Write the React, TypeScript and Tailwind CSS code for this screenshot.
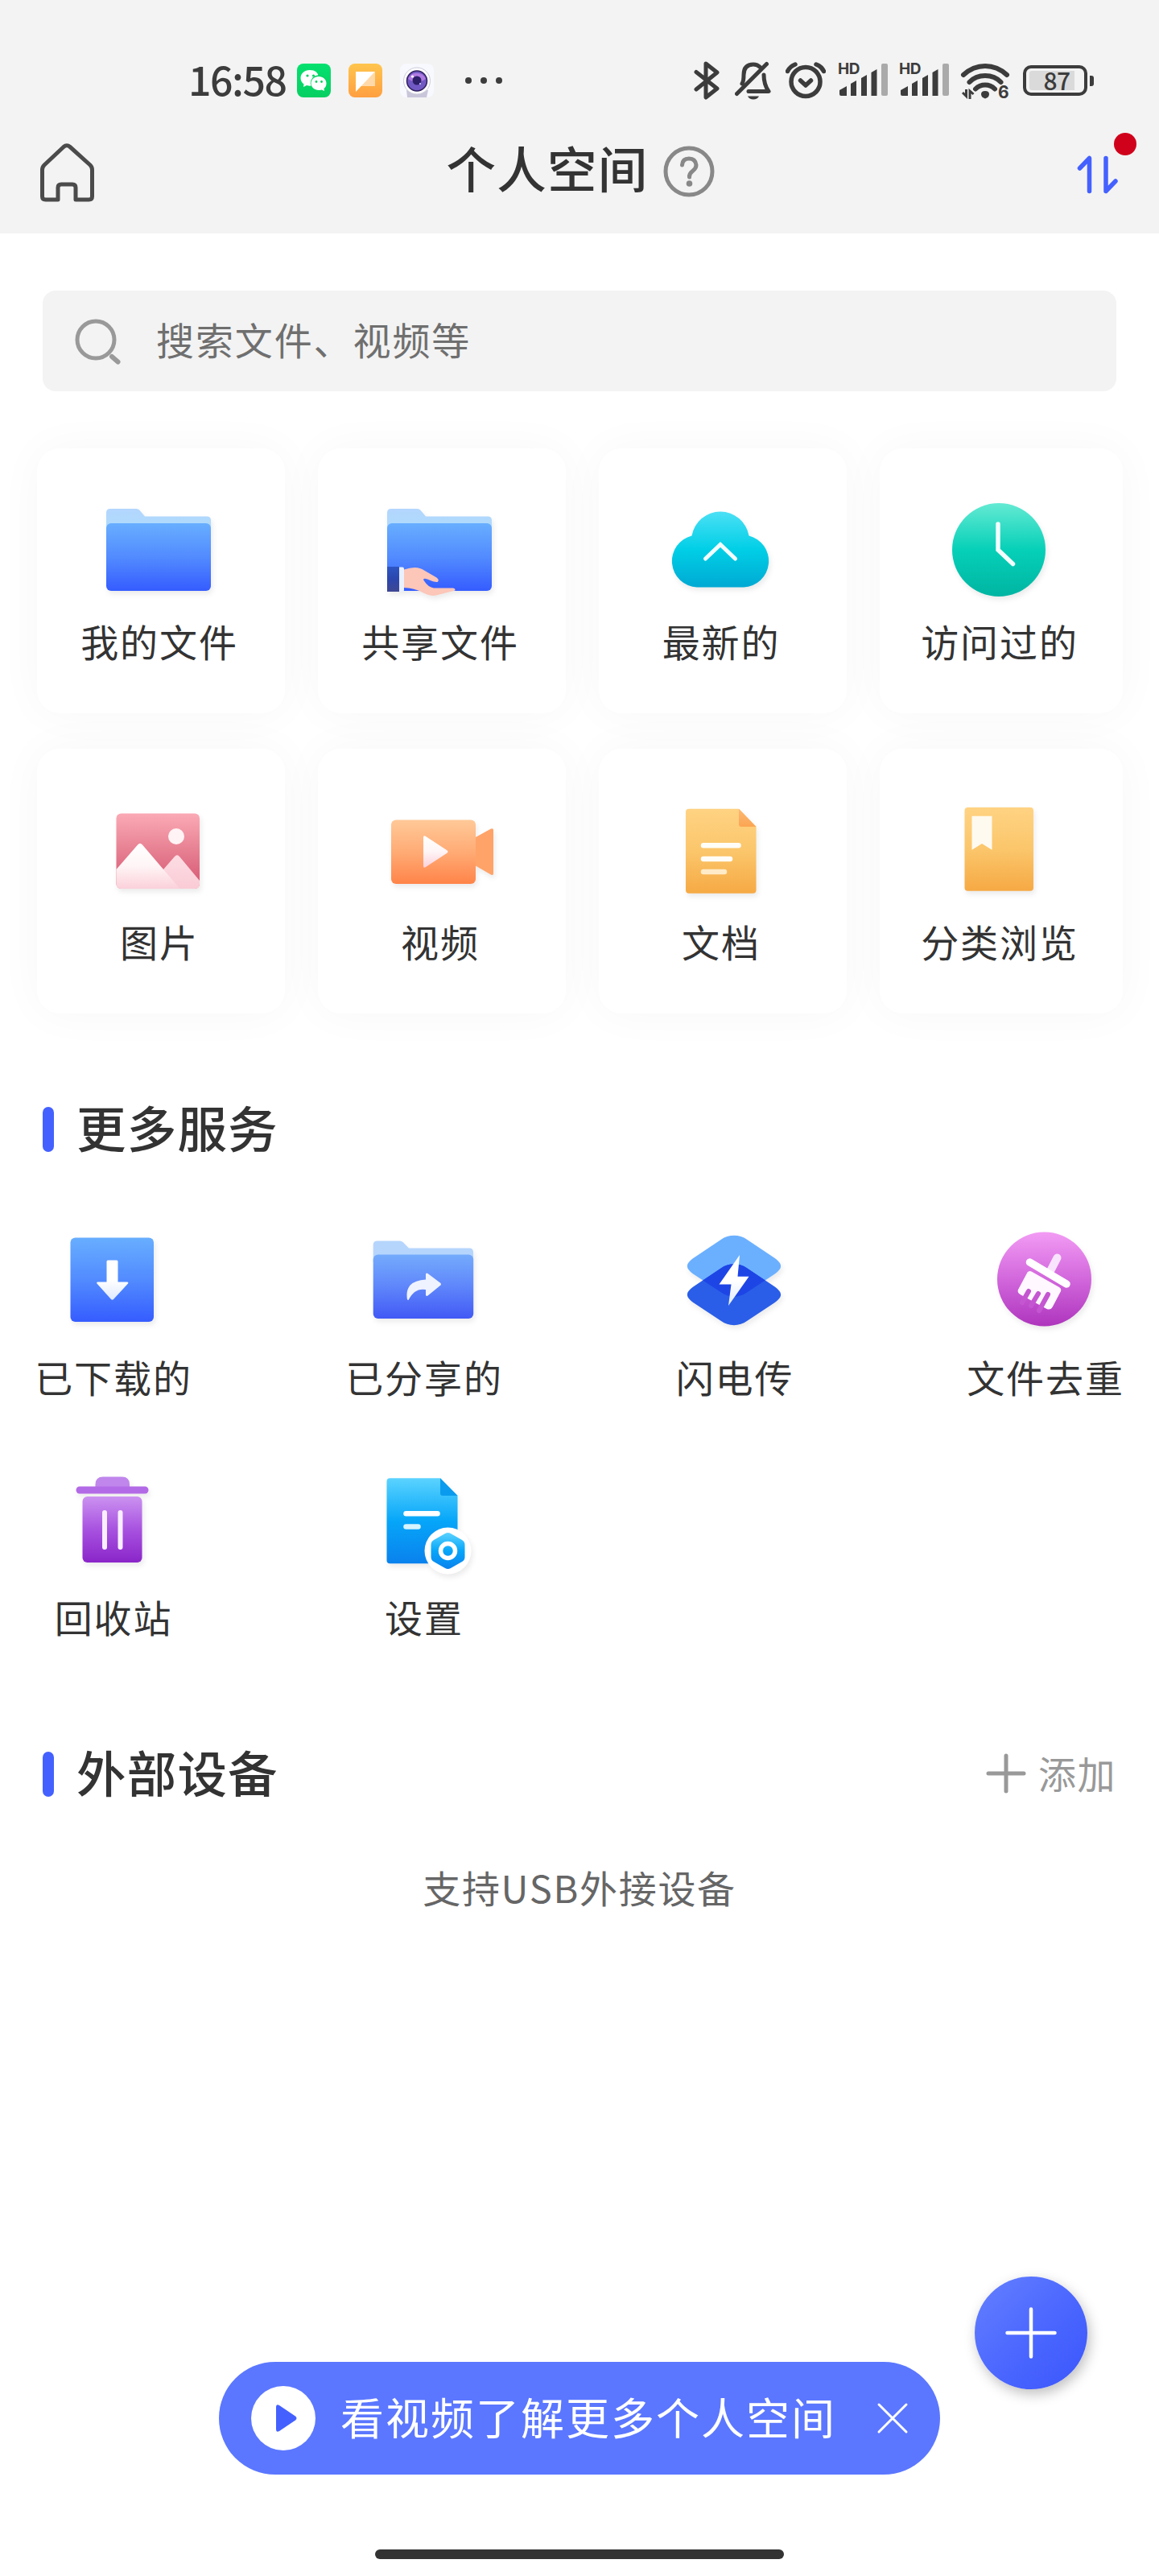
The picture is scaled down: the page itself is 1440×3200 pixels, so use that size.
import type { ReactNode } from "react";

const gradients = [
  { id: "blue", stops: ["#67aeff", "#528bff", "#355cff"] },
  { id: "tab", stops: ["#b3d6fe", "#aedbfb"] },
  { id: "sleeve", stops: ["#2d55c4", "#2c46ad", "#3f4793"] },
  { id: "indigo", stops: ["#74abfc", "#5f86fb", "#4159f5"] },
  { id: "cyan", stops: ["#4be0f5", "#00cfe6", "#00a9d3"] },
  { id: "green", stops: ["#64ead3", "#06d0b8", "#00b5a2"] },
  { id: "pink", stops: ["#fbaab5", "#e67f91", "#d65470"] },
  { id: "snow", stops: ["#ffffff", "#fff5f6", "#fbd0da"] },
  { id: "hill", stops: ["#fcdde4", "#facbd5"] },
  { id: "orange", stops: ["#ffc998", "#ffab75", "#ff8449"] },
  { id: "amber", stops: ["#ffd383", "#fbc66b", "#f6a944"] },
  { id: "fold", stops: ["#fdb873", "#fba552"] },
  { id: "magenta", stops: ["#f29bf4", "#d267dc", "#ae35bd"] },
  { id: "violet", stops: ["#cb92f0", "#a852e0", "#8a25c9"] },
  { id: "sky", stops: ["#5bd3ff", "#06a6f9", "#0a81ed"] },
  { id: "fade", stops: ["#ffffff", "#ffffff", "#dfe9ff"] },
  { id: "notes", stops: ["#ffc54d", "#ff9f40"] },
  { id: "wechat", stops: ["#04e06e", "#07cf62"] },
];

function Gradients() {
  return (
    <svg className="absolute h-0 w-0" aria-hidden="true">
      <defs>
        {gradients.map(({ id, stops }) => (
          <linearGradient key={id} id={id} x1="0" y1="0" x2="0" y2="1">
            {stops.map((color, i) => (
              <stop key={i} offset={i / (stops.length - 1)} stopColor={color} />
            ))}
          </linearGradient>
        ))}
      </defs>
    </svg>
  );
}

function TileIcon({ children }: { children: ReactNode }) {
  return (
    <svg className="h-[130px] w-[140px] shrink-0 overflow-visible drop-shadow-[2px_4px_3px_rgba(0,0,0,0.08)]" viewBox="0 0 140 130" fill="none">
      {children}
    </svg>
  );
}

function Folder() {
  return (
    <>
      <path d="M5 40V19q0-5 5-5h32q3.500 0 5.500 3l5.500 6.500H130q5 0 5 5V40z" fill="url(#tab)" />
      <rect x="5" y="32" width="130" height="84" rx="6" fill="url(#blue)" />
    </>
  );
}

const fileTiles = [
  { label: "我的文件", icon: <Folder /> },
  {
    label: "共享文件",
    icon: (
      <>
        <Folder />
        <path d="M5 86h15v31H5z" fill="url(#sleeve)" />
        <path d="M20 86.500h4q2 0 2 2V115q0 2-2 2h-4z" fill="#e9f0ff" />
        <path d="M26 89.500Q42 84 51 90.500L66.500 99.500Q70.500 102.500 67.500 105Q64 105.500 55 101.500Q49 99.500 50.500 103Q56 111.500 63 112.500L87 112.500Q90 113 89.500 115.500L66 121.500Q59 123 50 118.500Q38 112 26 112z" fill="#fcc6b8" />
      </>
    ),
  },
  {
    label: "最新的",
    icon: (
      <>
        <path d="M34.500 47.500A36 36 0 0 1 105.500 47.500A32.500 32.500 0 0 1 99 111.500H41A32.500 32.500 0 0 1 34.500 47.500z" fill="url(#cyan)" />
        <path d="M51.500 76L70 58.500L88.500 76" stroke="#f2fdff" strokeWidth="5" strokeLinecap="round" />
      </>
    ),
  },
  {
    label: "访问过的",
    icon: (
      <>
        <circle cx="70" cy="65" r="58" fill="url(#green)" />
        <path d="M69 33V65L87.500 82.500" stroke="#f2fffc" strokeWidth="5.500" strokeLinecap="round" />
      </>
    ),
  },
  {
    label: "图片",
    icon: (
      <>
        <rect x="17.500" y="19.500" width="103.500" height="93.500" rx="6" fill="url(#pink)" />
        <path d="M76 89L90 73q3-3.500 6 0L121 103V107q0 6-6 6H80z" fill="url(#hill)" />
        <path d="M17.500 89L44 58.500q3-3.500 6 0L96.500 113H23.500q-6 0-6-6z" fill="url(#snow)" />
        <circle cx="92" cy="48" r="10" fill="#fff3f5" />
      </>
    ),
  },
  {
    label: "视频",
    icon: (
      <>
        <path d="M114 49.500L134 38.500q3-1 3 1.500V94q0 3-3 1.500L114 84z" fill="#ffa369" />
        <rect x="10" y="27.500" width="105" height="79.500" rx="6" fill="url(#orange)" />
        <path d="M50 49.500q0-3.500 3-1.500L79 65q3 2 0 4L53 86q-3 2-3-1.500z" fill="url(#snow)" />
      </>
    ),
  },
  {
    label: "文档",
    icon: (
      <>
        <path d="M31 13.700H93L114.500 36V114.700q0 4-4 4H31q-4 0-4-4V17.700q0-4 4-4z" fill="url(#amber)" />
        <path d="M93 13.700L114.500 36H96q-3 0-3-3z" fill="url(#fold)" />
        <path d="M49 59.300H92.500M49 76H82" stroke="#fffdf8" strokeWidth="6.500" strokeLinecap="round" />
        <path d="M49 92H75" stroke="#ffebc8" strokeWidth="6.500" strokeLinecap="round" />
      </>
    ),
  },
  {
    label: "分类浏览",
    icon: (
      <>
        <rect x="27.500" y="12" width="85.500" height="103.700" rx="4" fill="url(#amber)" />
        <path d="M36.500 22.700H61.500V64.700L49 57L36.500 64.700z" fill="#fffaf0" />
      </>
    ),
  },
];

const DIAMOND =
  "M54 15.800C63 9 77 9 86 15.800L118.500 37.500C131.300 46 131.300 51.400 118.500 60L86 81.600C77 88.400 63 88.400 54 81.600L21.500 60C8.700 51.400 8.700 46 21.500 37.500z";

const services = [
  {
    label: "已下载的",
    icon: (
      <>
        <rect x="17.500" y="13.500" width="103.500" height="104.500" rx="6" fill="url(#blue)" />
        <path d="M64 41.500H75q1.500 0 1.500 1.500V68.500H88q2 0 1 2L71 90q-1.500 1.500-3 0L50.500 70.500q-1-2 1-2H62.500V43q0-1.500 1.500-1.500z" fill="url(#fade)" />
      </>
    ),
  },
  {
    label: "已分享的",
    icon: (
      <>
        <path d="M7.700 44V22.500q0-5 5-5H40.500q3.500 0 6 3.500l5.500 5.500H127q5 0 5 5V44z" fill="#b5d5fd" />
        <rect x="7.700" y="34.500" width="124.500" height="79.500" rx="6" fill="url(#indigo)" />
        <path d="M50 90.500Q46 67 73 65.500V58.500q1-1.500 2.500-.500L91.500 70q1 1.300 0 2.600L75.500 85.500q-1.500 1-2.500-.500V78Q59 75.500 51.500 91z" fill="#eff3ff" />
      </>
    ),
  },
  {
    label: "闪电传",
    icon: (
      <>
        <clipPath id="upper">
          <path d={DIAMOND} />
        </clipPath>
        <path d={DIAMOND} fill="#6bb0ff" />
        <path d={DIAMOND} transform="translate(0 35.500)" fill="#2a5ee8" />
        <g clipPath="url(#upper)">
          <path d={DIAMOND} transform="translate(0 35.500)" fill="#1d45e6" />
        </g>
        <path d="M77 35L74.500 61.700H88.500L63 98L66.500 71.500H51.500z" fill="url(#fade)" />
      </>
    ),
  },
  {
    label: "文件去重",
    icon: (
      <>
        <circle cx="69.500" cy="65" r="58.500" fill="url(#magenta)" />
        <path d="M85.500 38.500L77 55" stroke="#f9e4fd" strokeWidth="10" strokeLinecap="round" />
        <path d="M51.500 44L97 71" stroke="#fff" strokeWidth="9.500" strokeLinecap="round" />
        <path d="M48.500 56.500q2-2.500 5-1L88 75q3 2 2 5L80 99q-2.500 5-7.500 3L39.500 84q-4-2-2.500-6z" fill="#fff8ff" />
        <path d="M50 80L42 94M62 83L53 98M74 84L63 104" stroke="#c556d1" strokeWidth="6" strokeLinecap="round" />
      </>
    ),
  },
  {
    label: "回收站",
    icon: (
      <>
        <path d="M48.500 25V22q0-9.500 9.500-9.500H81.500q9.500 0 9.500 9.500v3z" fill="#c086ec" />
        <rect x="24.500" y="24.500" width="90" height="9" rx="4.500" fill="#b36ae6" />
        <rect x="32.500" y="37" width="74" height="82" rx="6" fill="url(#violet)" />
        <path d="M60 57V100M79.500 57V100" stroke="#f9eeff" strokeWidth="6" strokeLinecap="round" />
      </>
    ),
  },
  {
    label: "设置",
    icon: (
      <>
        <path d="M28.500 14.300H91L112.500 36V120.300H28.500q-4 0-4-4V18.300q0-4 4-4z" fill="url(#sky)" />
        <path d="M91 14.300L112.500 36H94q-3 0-3-3z" fill="#0a9bee" />
        <path d="M48.500 58.300H87.500" stroke="#fff" strokeWidth="6.500" strokeLinecap="round" />
        <path d="M48.500 74.500H63.500" stroke="#d5f4ff" strokeWidth="6.500" strokeLinecap="round" />
        <circle cx="100.500" cy="104.500" r="29" fill="#fff" />
        <path d="M97 83q3.500-2 7 0L118 91q3.500 2 3.500 6V112q0 4-3.500 6L104 126q-3.500 2-7 0L83 118q-3.500-2-3.500-6V97q0-4 3.500-6z" fill="url(#sky)" />
        <circle cx="100.500" cy="104.500" r="9" stroke="#fff" strokeWidth="5.500" />
      </>
    ),
  },
];

function Signal() {
  return (
    <div className="flex h-[44px] w-[63px] flex-col">
      <span className="h-[15px] whitespace-nowrap font-['Inter',sans-serif] text-[19px] font-bold leading-[15px] tracking-[-0.5px]">HD</span>
      <svg className="mt-[-14px] h-[41px] w-[63px]" viewBox="0 0 63 41">
        <path d="M2 33L11 28V40H4q-2 0-2-2zM16 25l7-4V40H16zM29 18l7-4V40H29zM41.500 11l7-4V40h-7z" fill="#3c3c3c" />
        <rect x="54" y="0" width="8" height="40" rx="2" fill="#aaa" />
      </svg>
    </div>
  );
}

function StatusBar() {
  return (
    <div className="flex h-[42px] items-center pl-[234px]">
      <span className="w-[135px] whitespace-nowrap pb-[6px] text-[50px] font-medium leading-[42px] tracking-[-1.500px] text-[#3c3c3c]">16:58</span>
      <div className="flex gap-[22px]">
        <svg className="size-[42px]" viewBox="0 0 42 42">
          <rect width="42" height="42" rx="8" fill="url(#wechat)" />
          <path d="M16 8c-7 0-11.500 4.500-11.500 10 0 3 1.500 5.500 4 7.500L8 29l4-2q6 1.500 9-.500Q31 12 27 17 26 8 16 8z" fill="#fff" />
          <circle cx="27" cy="24.500" r="10.300" fill="#07d466" />
          <path d="M27 16c-5.500 0-9.500 3.800-9.500 8.500s4 8.500 9.500 8.500q2 0 3.500-.500l3.500 1.500-.500-3q3-2.500 3-6.500c0-4.700-4-8.500-9.500-8.500z" fill="#fff" />
          <g fill="#07cf62">
            <circle cx="13" cy="15" r="1.600" />
            <circle cx="20.500" cy="15" r="1.600" />
            <circle cx="24" cy="22.500" r="1.400" />
            <circle cx="30.500" cy="22.500" r="1.400" />
          </g>
        </svg>
        <svg className="size-[42px]" viewBox="0 0 42 42">
          <rect width="42" height="42" rx="8" fill="url(#notes)" />
          <path d="M33 10V28H15z" fill="#ffd9a8" />
          <path d="M9 10H33L9 35z" fill="#fff" />
        </svg>
        <svg className="size-[42px]" viewBox="0 0 42 42">
          <rect width="42" height="42" rx="8" fill="#f8f9ff" />
          <path d="M8 33H35L33 42H9z" fill="#c9c6da" />
          <circle cx="21" cy="21.500" r="16.500" fill="#fff" stroke="#cbcbd8" />
          <circle cx="21" cy="21.500" r="12.500" fill="#7159c4" stroke="#30205e" strokeWidth="1.500" />
          <path d="M10 19a12 12 0 0 1 22 0q-11 8-22 0z" fill="#b07ae0" />
          <circle cx="21" cy="21" r="5.500" fill="#2d1f68" />
          <circle cx="15.500" cy="16" r="1.600" fill="#fff" />
          <circle cx="25" cy="25" r="1" fill="#d9d4ff" />
        </svg>
      </div>
      <div className="ml-[39px] flex gap-[11px]">
        <i className="size-2 rounded-full bg-[#3c3c3c]" />
        <i className="size-2 rounded-full bg-[#3c3c3c]" />
        <i className="size-2 rounded-full bg-[#3c3c3c]" />
      </div>

      <div className="ml-[238px] flex items-center text-[#3c3c3c]">
        <svg className="h-[48px] w-[32px]" viewBox="0 0 32 48" fill="none" stroke="currentColor" strokeWidth="5" strokeLinecap="round" strokeLinejoin="round">
          <path d="M3 13.500L29 34L15 45V3L29 14L3 35" />
        </svg>
        <svg className="ml-[19px] h-[48px] w-[45px]" viewBox="0 0 45 48" fill="none" stroke="currentColor" strokeWidth="5" strokeLinecap="round" strokeLinejoin="round">
          <path d="M9 28Q11 25 11 17Q11 4 23 4Q28 4 31.500 7.500M36 17Q36 29 42 37.500H17" />
          <path d="M39.500 3.500L2.500 40.500" />
          <path d="M16 43.500H30Q28 47.500 23 47.500T16 43.500z" fill="currentColor" stroke="none" />
        </svg>
        <svg className="ml-[18px] h-[48px] w-[50px]" viewBox="0 0 50 48" fill="none" stroke="currentColor" strokeWidth="5.500" strokeLinecap="round" strokeLinejoin="round">
          <circle cx="25" cy="25.500" r="18" />
          <path d="M2.500 12.500Q5.500 6.500 12 4M47.500 12.500Q44.500 6.500 38 4M18.500 24L25 30L31.500 24" />
        </svg>
        <div className="ml-[15px] flex gap-[13px]">
          <Signal />
          <Signal />
        </div>
        <svg className="ml-[14px] h-[48px] w-[46px] overflow-visible" viewBox="0 0 46 48" fill="none" stroke="currentColor">
          <path d="M3 17Q15 6 30 6T57 17M10.500 26Q18 18 30 18T49.500 26M18 34.500Q23 29.500 30 29.500T42 34.500" strokeWidth="6" strokeLinecap="round" />
          <path d="M25 41q0-4 5-4t5 4-5 5.500q-5-1.500-5-5.500z" fill="currentColor" stroke="none" />
          <path d="M2 39L6.500 43.500V35M11 47V37L15.500 41" strokeWidth="3" />
        </svg>
        <span className="w-[14px] whitespace-nowrap pt-[29px] font-['Inter',sans-serif] text-[21px] font-bold leading-[20px]">6</span>
        <div className="ml-[17px] flex h-[38px] w-[80px] items-center rounded-[10px] border-[4px] border-[#3c3c3c] p-[4px]">
          <div className="flex h-[24px] w-[56px] items-center justify-center rounded-l-[3px] bg-[#dadada] pb-[3px] pl-3 text-[30px] font-medium leading-none tracking-[-0.5px]">87</div>
        </div>
        <i className="ml-[3px] h-[13px] w-[5px] rounded-r-[3px] bg-[#3c3c3c]" />
      </div>
    </div>
  );
}

function SectionTitle({ children }: { children: ReactNode }) {
  return (
    <h2 className="flex items-center gap-[28px] text-[61.500px] font-medium leading-[60px] tracking-[1.200px]">
      <i className="h-[56px] w-[14px] rounded-full bg-[#4461ff]" />
      <span className="pb-[7px] leading-[53px]">{children}</span>
    </h2>
  );
}

export default function App() {
  return (
    <div className="relative flex h-[3200px] w-[1440px] flex-col overflow-hidden bg-white font-['MiSans','Noto_Sans_CJK_SC',sans-serif] text-[#333]">
      <Gradients />
      <header className="h-[290px] bg-[#f3f3f3] pt-[79px]">
        <StatusBar />
        <div className="mt-[44px] flex h-[98px] items-center justify-between pl-[48px] pr-[28px]">
          <svg className="h-[74px] w-[70px]" viewBox="0 0 70 74" fill="none" stroke="#4b4b4b" strokeWidth="5" strokeLinejoin="round">
            <path d="M31 5.500Q35 2 39 5.500L64 28Q66.500 30.500 66.500 34V67Q66.500 71 62.500 71H46V56Q46 52 42 52H28Q24 52 24 56V71H8.500Q4.500 71 4.500 67V34Q4.500 30.500 7 28z" />
          </svg>
          <div className="flex items-center gap-[19px] pr-[13px]">
            <h1 className="pb-[12px] text-[61.500px] font-medium leading-none tracking-[1.200px]">个人空间</h1>
            <svg className="mb-[2px] size-[64px]" viewBox="0 0 64 64" fill="none" stroke="#888" strokeWidth="5" strokeLinecap="round">
              <circle cx="32" cy="32" r="29" />
              <path d="M23.500 24Q24 16 32 16T41 24Q41 28 36.500 31.500T32.500 39" />
              <circle cx="32.500" cy="47" r="3.800" fill="#888" stroke="none" />
            </svg>
          </div>
          <div className="relative h-[80px] w-[74px]">
            <svg className="h-[80px] w-[74px]" viewBox="0 0 74 80" fill="none" stroke="#4461ff" strokeWidth="5.500" strokeLinecap="round" strokeLinejoin="round">
              <path d="M3.500 35L15.500 22.500V63.500M36 22.500V63.500L48 51" />
            </svg>
            <i className="absolute right-0 top-[-9px] size-[28px] rounded-full bg-[#d0021b]" />
          </div>
        </div>
      </header>

      <div className="mx-[53px] mt-[71px] flex h-[125px] items-center rounded-[16px] bg-[#f3f3f3] pl-[40px] text-[#6f6f6f]">
        <svg className="mr-[43px] size-[58px]" viewBox="0 0 58 58" fill="none" stroke="#999" strokeLinecap="round">
          <circle cx="26" cy="27" r="23" strokeWidth="5" />
          <path d="M46 48L53.500 54.500" strokeWidth="6" />
        </svg>
        <span className="pb-[7px] text-[47px] leading-none tracking-[1.900px]">搜索文件、视频等</span>
      </div>

      <div className="ml-[46px] mt-[71px] grid grid-cols-[308px_308px_308px_302px] gap-x-[41px] gap-y-[44px]">
        {fileTiles.map(({ label, icon }) => (
          <div key={label} className="flex h-[329px] flex-col items-center rounded-[28px] bg-white pr-[6px] pt-[61px] shadow-[0_0_56px_rgba(0,0,0,0.035)]">
            <TileIcon>{icon}</TileIcon>
            <p className="mt-[24px] whitespace-nowrap pl-[2px] text-[47px] leading-[48px] tracking-[1.900px]">{label}</p>
          </div>
        ))}
      </div>

      <section className="px-[53px] pt-[114px]">
        <SectionTitle>更多服务</SectionTitle>
      </section>
      <div className="ml-[44px] mr-[46px] mt-[91px] grid grid-cols-[repeat(4,192px)] justify-between">
        {services.map(({ label, icon }) => (
          <div key={label} className="flex h-[298px] flex-col items-center">
            <TileIcon>{icon}</TileIcon>
            <p className="mt-[32px] whitespace-nowrap pl-[2px] text-[47px] leading-[48px] tracking-[1.900px]">{label}</p>
          </div>
        ))}
      </div>

      <section className="mt-[54px] flex items-center justify-between px-[53px]">
        <SectionTitle>外部设备</SectionTitle>
        <button className="flex items-center gap-[15px] pb-[3px] text-[47px] leading-[48px] tracking-[1.500px] text-[#999]">
          <svg className="size-[50px]" viewBox="0 0 50 50" stroke="#999" strokeWidth="5" strokeLinecap="round">
            <path d="M3 25H47M25 3V47" />
          </svg>
          <span className="pb-[2px]">添加</span>
        </button>
      </section>
      <p className="mt-[86px] text-center text-[47px] leading-[48px] tracking-[1.700px] text-[#666]">支持USB外接设备</p>

      <button className="absolute left-[1211px] top-[2828px] grid size-[140px] place-items-center rounded-full bg-linear-to-br from-[#6680ff] via-[#4c68ff] to-[#3b55fb] shadow-[3px_6px_16px_rgba(0,0,0,0.25)]">
        <svg className="size-[64px]" viewBox="0 0 64 64" stroke="#fff" strokeWidth="4.500" strokeLinecap="round">
          <path d="M2.500 32H61.500M32 2.500V61.500" />
        </svg>
      </button>

      <div className="mx-auto mb-[93px] mt-auto flex h-[140px] w-[896px] items-center rounded-full bg-[#5b77ff] pl-[40px] text-[54px] leading-none tracking-[2px] text-white">
        <span className="mr-[31px] grid size-[80px] shrink-0 place-items-center rounded-full bg-white">
          <svg className="ml-[8px] h-[34px] w-[26px]" viewBox="0 0 26 34">
            <path d="M0 3Q0-1 4 1L24 14.500Q27 17 24 19.500L4 33Q0 35 0 31z" fill="#4461ff" />
          </svg>
        </span>
        <span className="whitespace-nowrap pb-[4px]">看视频了解更多个人空间</span>
        <svg className="ml-auto mr-[39px] size-[40px]" viewBox="0 0 40 40" stroke="#fff" strokeWidth="3" strokeLinecap="round">
          <path d="M3 3L37 37M37 3L3 37" />
        </svg>
      </div>
      <i className="mx-auto mb-[21px] h-[12px] w-[508px] shrink-0 rounded-full bg-[#333]" />
    </div>
  );
}
